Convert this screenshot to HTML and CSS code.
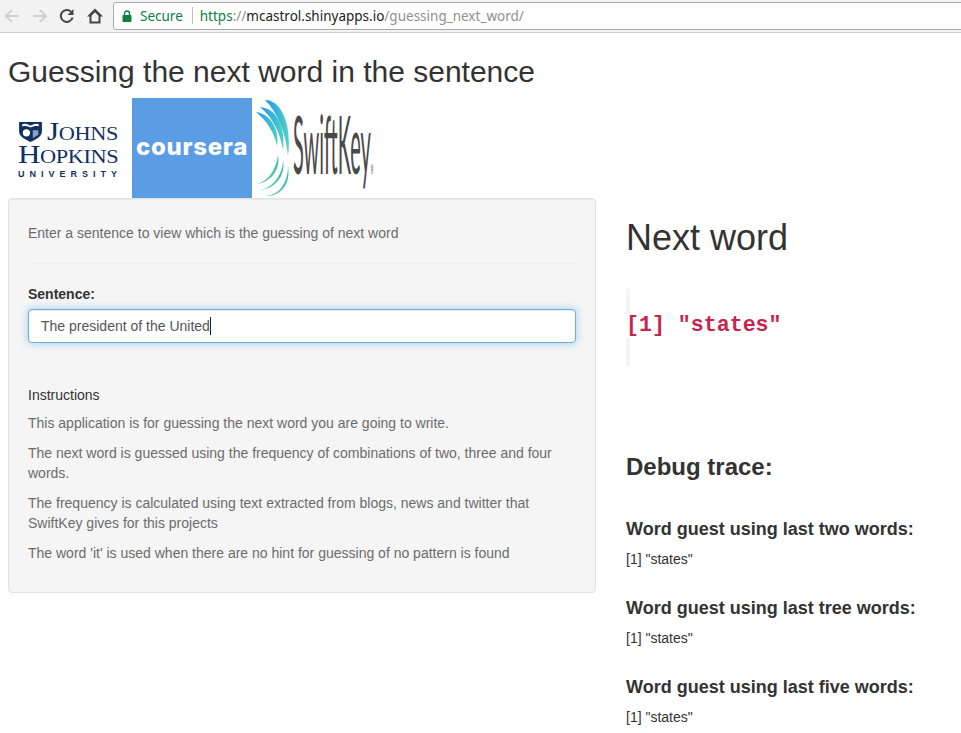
FILE: index.html
```html
<!DOCTYPE html>
<html lang="en">
<head>
<meta charset="utf-8">
<title>Guessing the next word</title>
<link rel="stylesheet" href="styles.css">
</head>
<body>
<header class="toolbar">
  <svg class="nav" width="18" height="18" viewBox="0 0 18 18"><path d="M16 9H3M9 3 3 9l6 6" fill="none" stroke="#d0d0d0" stroke-width="2"/></svg>
  <svg class="nav" width="18" height="18" viewBox="0 0 18 18"><path d="M2 9h13M9 3l6 6-6 6" fill="none" stroke="#d0d0d0" stroke-width="2"/></svg>
  <svg class="nav" width="18" height="18" viewBox="0 0 18 18"><path d="M14.600 10.500A6 6 0 1 1 13 4.600" fill="none" stroke="#444" stroke-width="2"/><path d="M15.500 2v6h-6z" fill="#444"/></svg>
  <svg class="nav" width="18" height="18" viewBox="0 0 18 18"><path d="M9 1.500 1 9.500H3.500V16.500h11V9.500H17zM5.500 8.800 9 5.300l3.500 3.500v5.700h-7z" fill="#444" fill-rule="evenodd"/></svg>
  <div class="omnibox">
    <svg class="lock" width="10" height="12" viewBox="0 0 10 12"><path d="M2.500 5V3.500a2.500 2.500 0 0 1 5 0V5" fill="none" stroke="#0b8043" stroke-width="1.400"/><rect x="0.500" y="5" width="9" height="7" rx="1" fill="#0b8043"/></svg>
    <span class="secure">Secure</span>
    <span class="sep"></span>
    <span class="url"><span class="scheme">https</span><span class="path">://</span><span class="host">mcastrol.shinyapps.io</span><span class="path">/guessing_next_word/</span></span>
  </div>
</header>

<main class="page">
  <h2 class="title">Guessing the next word in the sentence</h2>

  <div class="logos">
    <div class="logo-jhu">
      <div class="jhu-top">
        <svg class="shield" width="25" height="21" viewBox="0 0 25 23"><path d="M0 1h25v10c0 6-6 9-12.500 12C6 20 0 17 0 11z" fill="#12305f"/><path d="M3 4c4-2 6 0 9.500 1C16 4 19 2 22 4l-1 2c-3-1-5 0-8.500 1C9 6 7 5 4 6z" fill="#fff"/><circle cx="8" cy="13" r="4" fill="#fff"/><path d="M15 10h6v5l-6 4z" fill="#8ea0bd"/></svg>
        <span class="jhu-johns">Johns</span>
      </div>
      <div class="jhu-mid">Hopkins</div>
      <div class="jhu-bot">UNIVERSITY</div>
    </div>
    <div class="logo-coursera"><span>coursera</span></div>
    <div class="logo-swift">
      <svg class="swift-arcs" width="36" height="100" viewBox="0 0 36 100">
        <defs>
          <linearGradient id="g1" x1="0" y1="0" x2="1" y2="0"><stop offset="0" stop-color="#2196f3"/><stop offset="1" stop-color="#4fd0c0"/></linearGradient>
          <linearGradient id="g2" x1="0" y1="0" x2="1" y2="1"><stop offset="0" stop-color="#2196f3"/><stop offset="1" stop-color="#5fd68a"/></linearGradient>
          <linearGradient id="g3" x1="0" y1="1" x2="1" y2="0"><stop offset="0" stop-color="#62dc8c"/><stop offset="1" stop-color="#3bb6c8"/></linearGradient>
        </defs>
        <path d="M10 2C27 2 37 28 33 58 31 34 22 14 10 2z" fill="url(#g1)"/>
        <path d="M5 9C21 10 31 28 28 52 25 34 18 20 5 9z" fill="url(#g1)"/>
        <path d="M1 14C16 16 25 32 22 48 19 34 12 23 1 14z" fill="url(#g1)"/>
        <path d="M1 86C13 84 21 72 23 57 26 72 15 85 1 86z" fill="url(#g2)"/>
        <path d="M5 92C18 90 28 76 28 62 31 78 20 91 5 92z" fill="url(#g3)"/>
        <path d="M10 98C24 98 33 84 33 68 36 86 26 99 10 98z" fill="url(#g3)"/>
      </svg>
      <span class="swift-word">SwiftKey<span class="reg">®</span></span>
    </div>
  </div>

  <div class="columns">
    <section class="well">
      <p class="intro">Enter a sentence to view which is the guessing of next word</p>
      <hr class="rule">
      <label class="label" for="sentence">Sentence:</label>
      <div class="input"><span id="sentence">The president of the United</span><span class="caret"></span></div>
      <h5 class="instructions">Instructions</h5>
      <p class="para">This application is for guessing the next word you are going to write.</p>
      <p class="para">The next word is guessed using the frequency of combinations of two, three and four words.</p>
      <p class="para">The frequency is calculated using text extracted from blogs, news and twitter that SwiftKey gives for this projects</p>
      <p class="para">The word 'it' is used when there are no hint for guessing of no pattern is found</p>
    </section>

    <section class="results">
      <h1 class="next">Next word</h1>
      <div class="answer"><span class="answer-text">[1] "states"</span></div>
      <h3 class="debug">Debug trace:</h3>
      <h4 class="case">Word guest using last two words:</h4>
      <p class="out">[1] "states"</p>
      <h4 class="case">Word guest using last tree words:</h4>
      <p class="out">[1] "states"</p>
      <h4 class="case">Word guest using last five words:</h4>
      <p class="out">[1] "states"</p>
    </section>
  </div>
</main>
</body>
</html>
```
FILE: styles.css
```css
* { box-sizing: border-box; }
html, body { margin: 0; padding: 0; }
body {
  width: 961px;
  height: 733px;
  overflow: hidden;
  background: #fff;
  color: #333;
  font-family: "Liberation Sans", Arial, sans-serif;
  font-size: 14px;
  line-height: 20px;
}

.toolbar {
  height: 33px;
  display: flex;
  align-items: center;
  padding: 0 0 1px 3px;
  gap: 9.500px;
  background: #f2f2f2;
  border-bottom: 1px solid #cfcfcf;
}
.nav { flex: none; }
.omnibox {
  flex: 1;
  height: 28px;
  margin-right: -1px;
  display: flex;
  align-items: center;
  padding-left: 8px;
  background: #fff;
  border: 1px solid #aaa;
  border-radius: 3px 0 0 3px;
  font-family: "Noto Sans", "DejaVu Sans", sans-serif;
  font-size: 13.500px;
}
.lock { flex: none; }
.secure { color: #0b8043; margin-left: 8px; }
.sep { width: 1px; height: 17px; background: #c0c0c0; margin: 0 7px 0 9px; }
.scheme { color: #0b8043; }
.host { color: #222; }
.path { color: #909090; }

.page { padding: 0 8px; }
.title {
  margin: 0;
  padding-top: 21px;
  height: 65px;
  font-size: 30px;
  font-weight: 400;
  line-height: 36px;
}

.logos { display: flex; height: 100px; }
.logo-jhu {
  flex: none;
  width: 120px;
  padding: 22px 0 0 10px;
  color: #12305f;
  font-family: "Liberation Serif", serif;
}
.jhu-top { display: flex; align-items: center; gap: 4px; height: 23px; }
.shield { flex: none; }
.jhu-johns {
  display: block;
  font-size: 25px;
  line-height: 23px;
  font-variant: small-caps;
  letter-spacing: -0.300px;
  transform: scaleX(1.240);
  transform-origin: 0 50%;
}
.jhu-mid {
  height: 24px;
  line-height: 24px;
  font-size: 25px;
  font-variant: small-caps;
  letter-spacing: -0.300px;
  transform: scaleX(1.240);
  transform-origin: 0 50%;
}
.jhu-bot { margin-top: 1px; font: 700 9px/12px "Liberation Sans", sans-serif; letter-spacing: 5px; white-space: nowrap; }
.logo-coursera {
  flex: none;
  width: 120px;
  margin-left: 4px;
  display: flex;
  align-items: center;
  justify-content: center;
  padding-bottom: 2px;
  background: #5b9de4;
  color: #fff;
  font: 800 24px/1 Inter, sans-serif;
  letter-spacing: 0.700px;
}
.logo-swift { flex: none; width: 125px; margin-left: 3px; display: flex; align-items: flex-start; }
.swift-arcs { flex: none; }
.swift-word {
  display: block;
  flex: none;
  margin: 1px 0 0 2px;
  color: #4a4a4a;
  font: 400 37px/40px Lato, "Liberation Sans", sans-serif;
  white-space: nowrap;
  transform: scale(0.540, 2.200);
  transform-origin: 0 0;
}
.reg { font-size: 6px; }

.columns { display: flex; align-items: flex-start; }
.well {
  flex: none;
  width: 588px;
  height: 395px;
  padding: 19px 19px 0;
  background: #f5f5f5;
  border: 1px solid #e3e3e3;
  border-radius: 4px;
  box-shadow: inset 0 1px 1px rgba(0,0,0,.05);
}
.intro { margin: 5px 0 0; color: #6c6c6c; }
.rule { margin: 20px 0 20px; border: 0; border-top: 1px solid #eee; }
.label { display: block; margin-bottom: 5px; font-weight: 700; }
.input {
  height: 34px;
  padding: 6px 12px;
  background: #fff;
  border: 1px solid #66afe9;
  border-radius: 4px;
  box-shadow: inset 0 1px 1px rgba(0,0,0,.075), 0 0 8px rgba(102,175,233,.6);
  color: #555;
  display: flex;
}
.caret { width: 1px; height: 18px; margin-top: 1px; background: #222; }
.instructions { margin: 42px 0 8px; font-size: 14px; font-weight: 400; line-height: 20px; color: #333; }
.para { margin: 0 0 10px; color: #6c6c6c; }

.results { flex: none; width: 335px; margin-left: 30px; }
.next { margin: 20px 0 0; font-size: 36px; font-weight: 400; line-height: 40px; }
.answer {
  width: 4px;
  height: 78px;
  margin-top: 30px;
  display: flex;
  align-items: center;
  background: #f9f2f4;
  border-radius: 4px;
}
.answer-text {
  flex: none;
  margin-bottom: 2px;
  padding-bottom: 2px;
  background: #fff;
  color: #c7254e;
  font: 700 21.600px/22px "Liberation Mono", monospace;
  white-space: pre;
}
.debug { margin: 87px 0 0; font-size: 24px; font-weight: 700; line-height: 28px; }
.case { margin: 0; padding-top: 29px; font-size: 18px; font-weight: 700; line-height: 20px; }
.debug + .case { padding-top: 38px; }
.out { margin: 10px 0 0; }
```
